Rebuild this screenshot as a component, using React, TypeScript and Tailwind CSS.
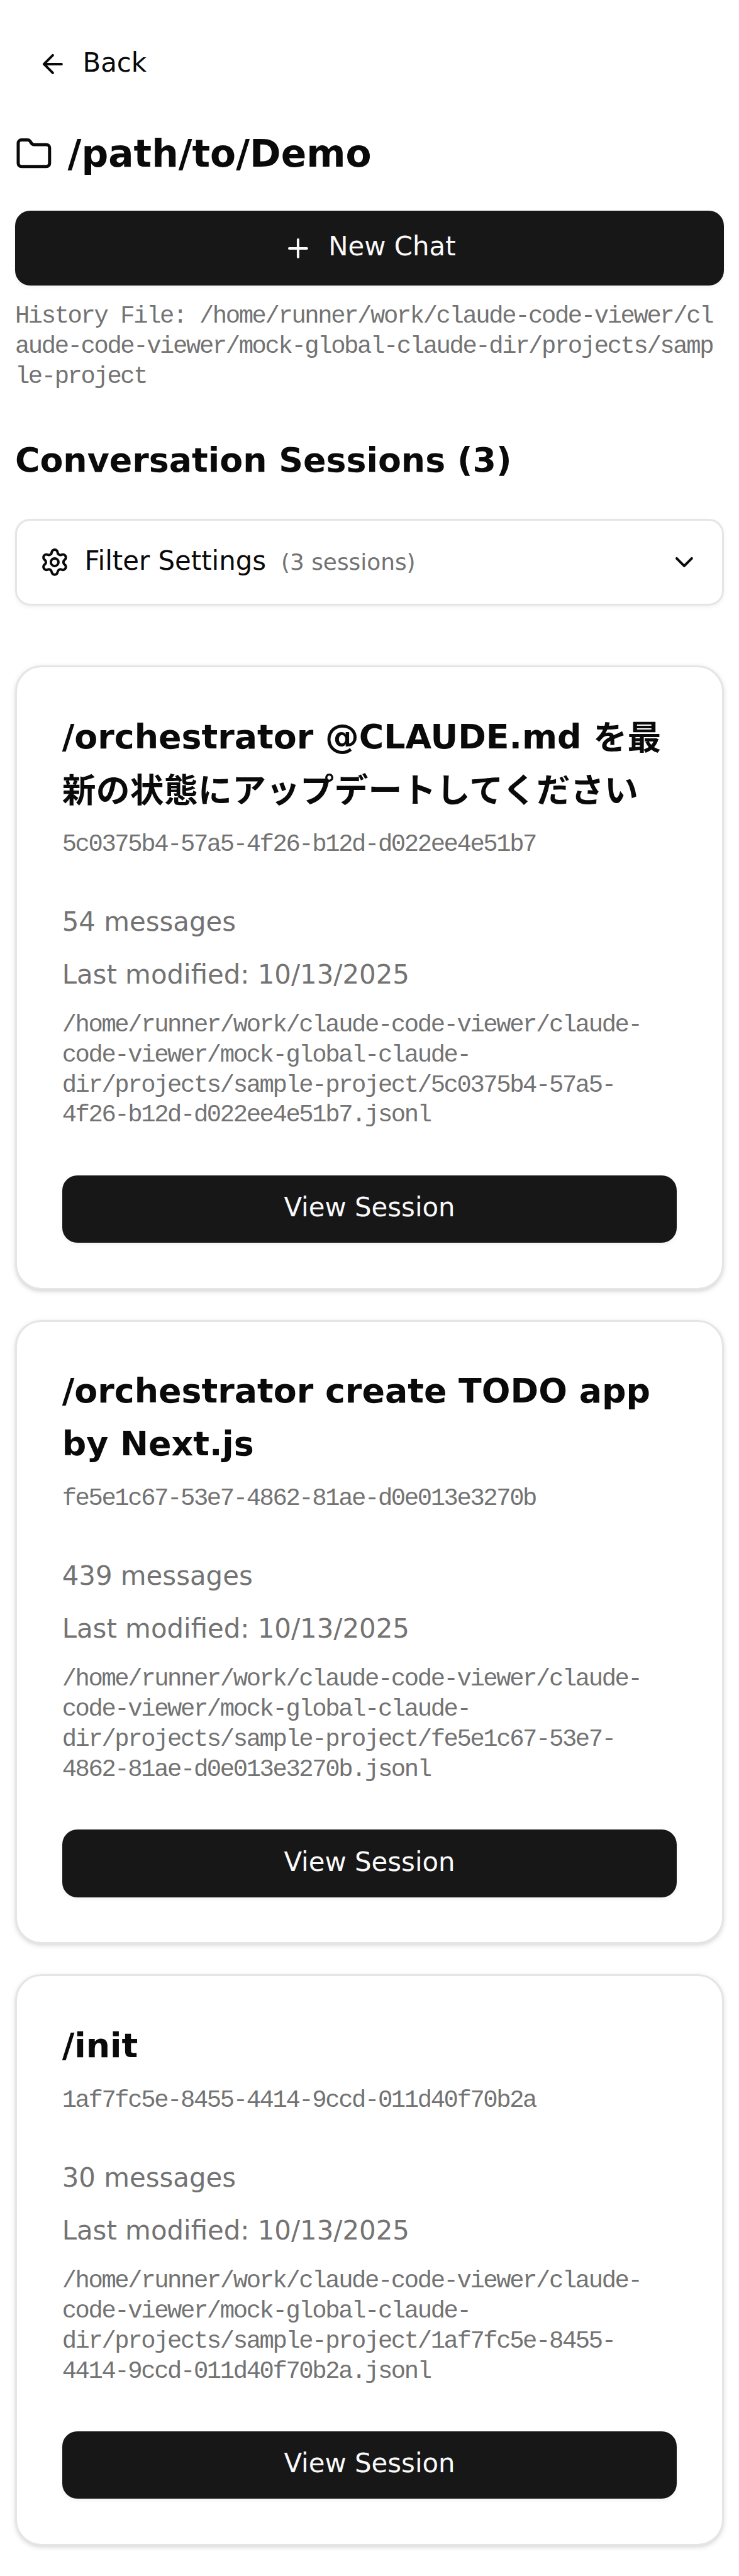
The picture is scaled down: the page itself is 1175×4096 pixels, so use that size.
import { ArrowLeft, ChevronDown, Folder, Plus, Settings } from "lucide-react";

const sessions = [
  {
    title: "/orchestrator @CLAUDE.md ",
    titleJa: "を最新の状態にアップデートしてください",
    id: "5c0375b4-57a5-4f26-b12d-d022ee4e51b7",
    messages: 54,
  },
  {
    title: "/orchestrator create TODO app by Next.js",
    titleJa: "",
    id: "fe5e1c67-53e7-4862-81ae-d0e013e3270b",
    messages: 439,
  },
  {
    title: "/init",
    titleJa: "",
    id: "1af7fc5e-8455-4414-9ccd-011d40f70b2a",
    messages: 30,
  },
];

const projectPath =
  "/home/runner/work/claude-code-viewer/claude-code-viewer/mock-global-claude-dir/projects/sample-project";

function SessionCard({ title, titleJa, id, messages }: (typeof sessions)[number]) {
  return (
    <article className="flex flex-col gap-6 rounded-[14px] border-[1.004px] border-[#e5e5e5] bg-white p-6 shadow-sm">
      <header className="flex flex-col gap-1.5">
        <h3 className="-mt-[1.1px] mb-[1.1px] text-lg/7 font-semibold break-words">
          {title}
          {titleJa && <span className="align-[-0.7px] leading-none tracking-[0.1px]">{titleJa}</span>}
        </h3>
        <p className="mt-[0.5px] -mb-[0.5px] font-['Liberation_Mono',monospace] text-[13px]/4 tracking-[-0.8px] text-[#737373]">
          {id}
        </p>
      </header>
      <div className="flex flex-col gap-2 text-sm/5 text-[#737373]">
        <p className="-mt-[0.7px] mb-[0.7px]">{`${messages} messages`}</p>
        <p className="-mt-[0.7px] mb-[0.7px]">Last modified: 10/13/2025</p>
        <p className="mt-[0.5px] -mb-[0.5px] font-['Liberation_Mono',monospace] text-[13px]/4 tracking-[-0.8px]">
          {`${projectPath}/${id}.jsonl`}
        </p>
      </div>
      <button className="h-9 w-full rounded-lg bg-[#171717] pb-[1.5px] text-sm/5 font-medium text-[#fafafa] shadow-xs">
        View Session
      </button>
    </article>
  );
}

export default function App() {
  return (
    <main className="flex flex-col bg-white px-2 py-4 font-['DejaVu_Sans','Noto_Sans_CJK_JP',sans-serif] text-[#0a0a0a] [zoom:2.98982]">
      <button className="flex h-9 items-center gap-2 self-start px-3 text-sm/5 font-medium">
        <ArrowLeft size={16} />
        <span className="pb-[1.5px]">Back</span>
      </button>
      <h1 className="mt-4 flex items-center gap-2 text-xl/7 font-bold">
        <Folder size={20} />
        /path/to/Demo
      </h1>
      <button className="mt-4 flex h-10 items-center justify-center gap-2 rounded-lg bg-[#171717] text-sm/5 font-medium text-[#fafafa] shadow-xs">
        <Plus size={16} />
        <span className="pb-[1.5px]">New Chat</span>
      </button>
      <p className="mt-[8.5px] -mb-[0.5px] font-['Liberation_Mono',monospace] text-[13px]/4 tracking-[-0.8px] break-all text-[#737373]">
        {`History File: ${projectPath}`}
      </p>
      <h2 className="mt-[22.9px] mb-[1.1px] text-lg/7 font-semibold">Conversation Sessions (3)</h2>
      <div className="mt-4 flex h-[46px] items-center gap-2 rounded-lg border-[1.004px] border-[#e5e5e5] px-3 text-sm/5 font-medium shadow-xs">
        <Settings size={16} />
        <span className="pb-[1.5px]">Filter Settings</span>
        <span className="text-xs/4 font-normal text-[#737373]">(3 sessions)</span>
        <ChevronDown size={16} className="ml-auto" />
      </div>
      <section className="mt-8 flex flex-col gap-4">
        {sessions.map((s) => (
          <SessionCard key={s.id} {...s} />
        ))}
      </section>
    </main>
  );
}
